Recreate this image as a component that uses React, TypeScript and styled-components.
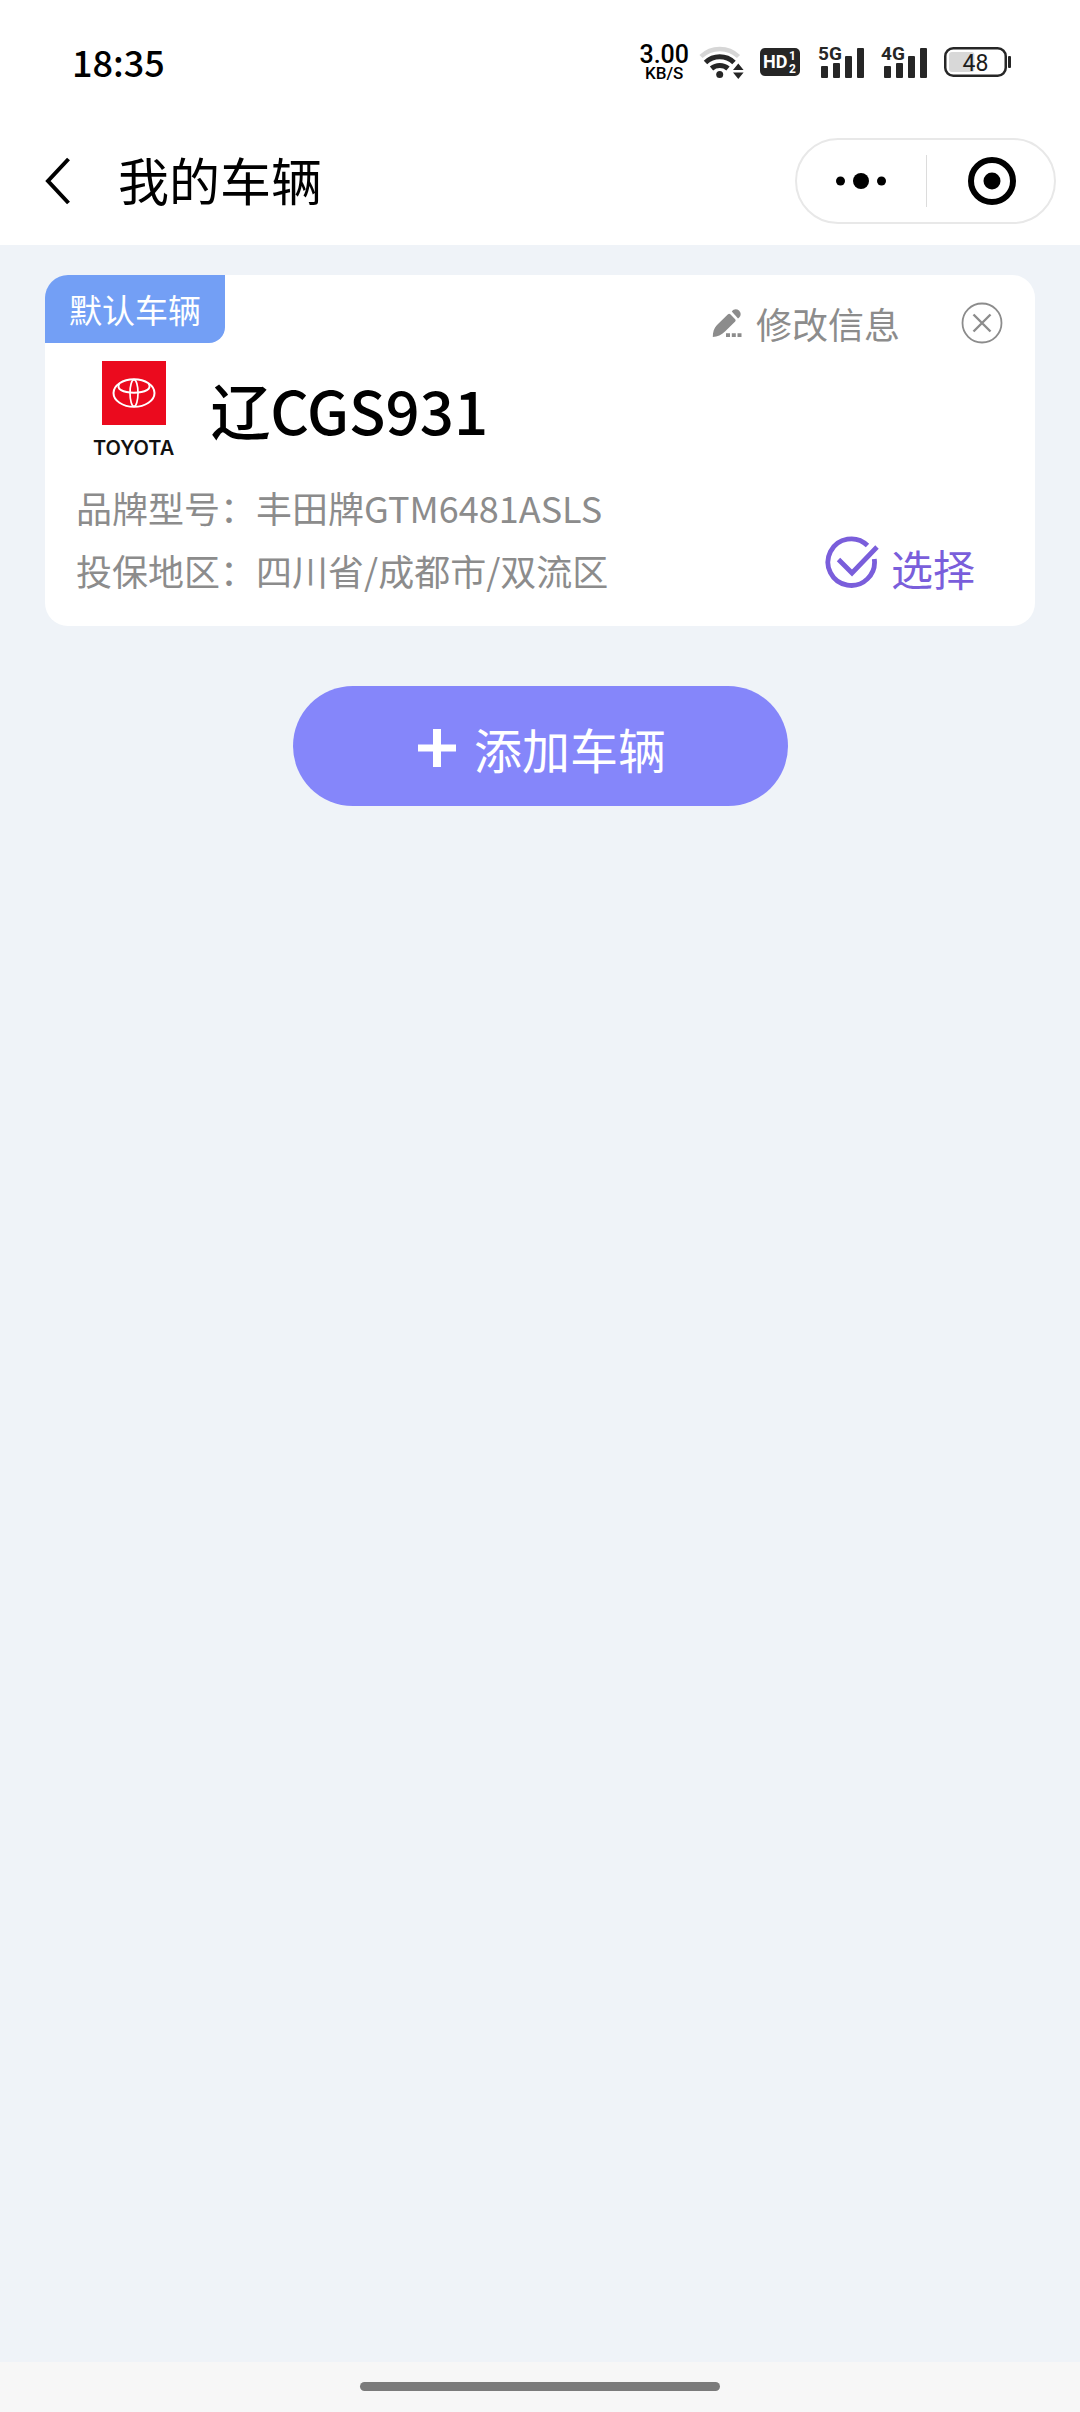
import React from "react";
import styled, { createGlobalStyle } from "styled-components";

const GlobalStyle = createGlobalStyle`
  *, *::before, *::after { box-sizing: border-box; }
  body {
    margin: 0;
    background: #eff3f8;
    font-family: "Noto Sans CJK SC", "Noto Sans", sans-serif;
    color: #000;
  }
  button {
    margin: 0;
    padding: 0;
    border: 0;
    background: none;
    color: inherit;
    font: inherit;
    cursor: pointer;
  }
  svg { display: block; flex: none; }
`;

const Page = styled.div`
  display: flex;
  flex-direction: column;
  min-height: 100vh;
`;

const StatusBar = styled.div`
  display: flex;
  align-items: center;
  justify-content: space-between;
  height: 124px;
  padding: 0 68px 0 72px;
  background: #fff;
`;

const Clock = styled.time`
  padding-bottom: 3px;
  font-size: 36px;
  line-height: 48px;
  font-weight: 500;
`;

const StatusIcons = styled.div`
  display: flex;
  align-items: center;
  gap: 16px;
`;

const Speed = styled.div`
  display: flex;
  flex-direction: column;
  align-items: center;
  margin-right: -6px;
  padding-top: 2px;
  font-family: Roboto, sans-serif;
  font-weight: 500;
`;

const SpeedValue = styled.span`
  font-size: 25px;
  line-height: 20px;
`;

const SpeedUnit = styled.span`
  font-size: 17px;
  line-height: 16px;
`;

const NavBar = styled.header`
  display: flex;
  align-items: center;
  height: 121px;
  padding: 0 24px 8px 36px;
  background: #fff;
`;

const BackButton = styled.button`
  display: grid;
  place-items: center;
  width: 44px;
  height: 60px;
`;

const Title = styled.h1`
  flex: 1;
  margin: 0;
  padding: 0 0 3px 38px;
  font-size: 51px;
  line-height: 72px;
  font-weight: 400;
`;

const Capsule = styled.div`
  display: flex;
  align-items: center;
  width: 261px;
  height: 86px;
  border: 2px solid #e8e8e8;
  border-radius: 43px;
`;

const CapsuleButton = styled.button`
  display: grid;
  place-items: center;
  width: 50%;
  height: 52px;

  & + & {
    padding-left: 4px;
    border-left: 1px solid #dcdcdc;
  }
`;

const Content = styled.main`
  flex: 1;
  display: flex;
  flex-direction: column;
  align-items: center;
  gap: 60px;
  padding: 30px 45px;
`;

const Card = styled.article`
  width: 100%;
  padding-bottom: 24px;
  overflow: hidden;
  border-radius: 23px;
  background: #fff;
`;

const CardTop = styled.div`
  display: flex;
  align-items: flex-start;
  justify-content: space-between;
`;

const Badge = styled.span`
  width: 180px;
  border-radius: 0 0 16px 0;
  background: #739ff5;
  color: #fff;
  font-size: 33px;
  line-height: 68px;
  text-align: center;
`;

const CardActions = styled.div`
  display: flex;
  align-items: center;
  gap: 61px;
  padding: 24px 32px 0 0;
  color: #8c8c8c;
`;

const EditButton = styled.button`
  display: flex;
  align-items: center;
  gap: 14px;
  font-size: 36px;
  line-height: 48px;
`;

const Identity = styled.div`
  display: flex;
  align-items: flex-start;
  gap: 36px;
  padding: 14px 48px 0;
`;

const Brand = styled.div`
  display: flex;
  flex-direction: column;
  align-items: center;
  gap: 11px;
`;

const BrandName = styled.span`
  font-family: Inter, sans-serif;
  font-size: 20px;
  line-height: 24px;
  font-weight: 600;
  color: #111;
`;

const Plate = styled.h2`
  margin: 0;
  font-size: 60px;
  line-height: 96px;
  font-weight: 500;
`;

const CardBottom = styled.div`
  display: flex;
  align-items: flex-end;
  justify-content: space-between;
  padding: 16px 60px 0 31px;
`;

const Details = styled.dl`
  margin: 0;
  color: #8c8c8c;
  font-size: 36px;
  line-height: 63px;
`;

const DetailRow = styled.div`
  display: flex;
`;

const DetailLabel = styled.dt`
  margin: 0;
`;

const DetailValue = styled.dd`
  margin: 0;
`;

const SelectButton = styled.button`
  display: flex;
  align-items: flex-start;
  gap: 12px;
  padding-bottom: 2px;
  color: #7a5edb;
  font-size: 42px;
  line-height: 64px;
`;

const AddButton = styled.button`
  display: flex;
  align-items: center;
  justify-content: center;
  gap: 18px;
  width: 50%;
  height: 120px;
  padding: 4px 0 0 4px;
  border-radius: 60px;
  background: #8586fa;
  color: #fff;
  font-size: 48px;
  line-height: 72px;
`;

const GestureBar = styled.footer`
  display: flex;
  align-items: center;
  justify-content: center;
  height: 50px;
  padding-bottom: 2px;
  background: #f7f7f7;
`;

const GestureHandle = styled.span`
  width: 33.33%;
  height: 9px;
  border-radius: 5px;
  background: #7b7b7b;
`;

const WifiIcon = () => (
  <svg width="45" height="36" viewBox="0 0 45 36" fill="none" aria-hidden="true">
    <path d="M2 12.5a27 27 0 0 1 37.500 0" stroke="#d6d6d6" strokeWidth="4.500" />
    <path d="M6.500 18.500a20.500 20.500 0 0 1 28.500 0" stroke="#262626" strokeWidth="5" />
    <path d="M12.500 24.500a12.500 12.500 0 0 1 16.500 0" stroke="#262626" strokeWidth="5" />
    <circle cx="20.700" cy="30.500" r="3.500" fill="#262626" />
    <path d="M34 26l5.300-6.500 5.300 6.500zM34 28.500l5.300 6.500 5.300-6.500z" fill="#262626" />
  </svg>
);

const HdIcon = () => (
  <svg width="42" height="40" viewBox="0 -6 42 40" role="img" aria-label="HD">
    <rect width="40" height="28" rx="5" fill="#262626" />
    <g fill="#fff" fontWeight="700" fontFamily="Roboto, sans-serif">
      <text x="3" y="20" fontSize="18">HD</text>
      <text x="29" y="12" fontSize="12">1</text>
      <text x="29" y="25" fontSize="12">2</text>
    </g>
  </svg>
);

const SignalIcon = ({ label }: { label: string }) => (
  <svg width="47" height="46" viewBox="0 -6 47 46" role="img" aria-label={label}>
    <text x="0" y="15" fontSize="19" fontWeight="700" fontFamily="Roboto, sans-serif" fill="#262626">
      {label}
    </text>
    <g fill="#262626">
      <rect x="3" y="21" width="7" height="12" rx="1" />
      <rect x="15" y="18" width="7" height="15" rx="1" />
      <rect x="27" y="11" width="7" height="22" rx="1" />
      <rect x="39" y="3" width="7" height="30" rx="1" />
    </g>
  </svg>
);

const BatteryIcon = ({ level }: { level: number }) => (
  <svg width="68" height="30" viewBox="0 0 68 30" role="img" aria-label={`${level}%`}>
    <rect x="5" y="5" width={(53 * level) / 100} height="20" rx="3" fill="#d8d8d8" />
    <rect x="1.250" y="1.250" width="60.500" height="27.500" rx="8" fill="none" stroke="#262626" strokeWidth="2.500" />
    <rect x="64" y="9" width="3" height="12" rx="1" fill="#262626" />
    <text x="31.500" y="23.500" fontSize="23" textAnchor="middle" fontFamily="Roboto, sans-serif" fill="#1c1c1c">
      {level}
    </text>
  </svg>
);

const BackIcon = () => (
  <svg width="26" height="48" viewBox="0 0 26 48" fill="none" aria-hidden="true">
    <path d="M23.500 2L3 24l20.500 22" stroke="#000" strokeWidth="4" />
  </svg>
);

const MoreIcon = () => (
  <svg width="52" height="18" viewBox="0 0 52 18" aria-hidden="true">
    <circle cx="5.500" cy="9" r="4.500" />
    <circle cx="26" cy="9" r="8" />
    <circle cx="46.500" cy="9" r="4.500" />
  </svg>
);

const TargetIcon = () => (
  <svg width="48" height="48" viewBox="0 0 48 48" aria-hidden="true">
    <circle cx="24" cy="24" r="21" fill="none" stroke="#000" strokeWidth="6" />
    <circle cx="24" cy="24" r="8.500" />
  </svg>
);

const PencilIcon = () => (
  <svg width="30" height="30" viewBox="0 0 30 30" fill="currentColor" aria-hidden="true">
    <path d="M.8 29C.8 24 2 20 5 17L16 6.300q1.200-1 2.300 0l4.900 5q1 1.100 0 2.200L13 23.500C9.500 27 5.500 28.600.8 29z" />
    <path d="M19.800 3.500C21.500.8 24.800.5 27 2.600s2.200 5.200.2 7l-1.200 1z" />
    <path d="M14 25.300h4v3.700h-4zM19.800 25.300h4v3.700h-4zM25.500 25.300h4v3.700h-4z" />
  </svg>
);

const CloseIcon = () => (
  <svg width="42" height="42" viewBox="0 0 42 42" fill="none" stroke="currentColor" aria-hidden="true">
    <circle cx="21" cy="21" r="19.500" strokeWidth="1.800" />
    <path d="M12.500 12.500l17 17m0-17l-17 17" strokeWidth="2.400" />
  </svg>
);

const ToyotaEmblem = () => (
  <svg width="64" height="64" viewBox="0 0 64 64" fill="none" stroke="#fff" aria-hidden="true">
    <rect width="64" height="64" fill="#eb0a1e" stroke="none" />
    <ellipse cx="32" cy="32" rx="20.500" ry="13.800" strokeWidth="2" />
    <ellipse cx="32" cy="32" rx="4" ry="13.300" strokeWidth="1.700" />
    <path d="M17.500 22.500c-4 5.300 3.500 9.200 14.500 9.200s18.500-3.900 14.500-9.200" strokeWidth="2" />
  </svg>
);

const CheckIcon = () => (
  <svg width="54" height="54" viewBox="0 0 54 54" fill="none" stroke="currentColor" strokeWidth="4.800" aria-hidden="true">
    <path d="M42.500 9.500A23.300 23.300 0 1 0 49.300 23" />
    <path d="M13.500 23.500L27 37 52 11" />
  </svg>
);

const PlusIcon = () => (
  <svg width="38" height="38" viewBox="0 0 38 38" fill="currentColor" aria-hidden="true">
    <path d="M15 0h8v15.500h15v7H23V38h-8V22.500H0v-7h15z" />
  </svg>
);

const details = [
  { label: "品牌型号：", value: "丰田牌GTM6481ASLS" },
  { label: "投保地区：", value: "四川省/成都市/双流区" },
];

export default function App() {
  return (
    <Page>
      <GlobalStyle />
      <StatusBar>
        <Clock>18:35</Clock>
        <StatusIcons>
          <Speed>
            <SpeedValue>3.00</SpeedValue>
            <SpeedUnit>KB/S</SpeedUnit>
          </Speed>
          <WifiIcon />
          <HdIcon />
          <SignalIcon label="5G" />
          <SignalIcon label="4G" />
          <BatteryIcon level={48} />
        </StatusIcons>
      </StatusBar>

      <NavBar>
        <BackButton type="button" aria-label="返回">
          <BackIcon />
        </BackButton>
        <Title>我的车辆</Title>
        <Capsule>
          <CapsuleButton type="button" aria-label="更多">
            <MoreIcon />
          </CapsuleButton>
          <CapsuleButton type="button" aria-label="关闭">
            <TargetIcon />
          </CapsuleButton>
        </Capsule>
      </NavBar>

      <Content>
        <Card>
          <CardTop>
            <Badge>默认车辆</Badge>
            <CardActions>
              <EditButton type="button">
                <PencilIcon />
                修改信息
              </EditButton>
              <button type="button" aria-label="删除">
                <CloseIcon />
              </button>
            </CardActions>
          </CardTop>

          <Identity>
            <Brand>
              <ToyotaEmblem />
              <BrandName>TOYOTA</BrandName>
            </Brand>
            <Plate>辽CGS931</Plate>
          </Identity>

          <CardBottom>
            <Details>
              {details.map((item) => (
                <DetailRow key={item.label}>
                  <DetailLabel>{item.label}</DetailLabel>
                  <DetailValue>{item.value}</DetailValue>
                </DetailRow>
              ))}
            </Details>
            <SelectButton type="button">
              <CheckIcon />
              选择
            </SelectButton>
          </CardBottom>
        </Card>

        <AddButton type="button">
          <PlusIcon />
          添加车辆
        </AddButton>
      </Content>

      <GestureBar>
        <GestureHandle />
      </GestureBar>
    </Page>
  );
}
